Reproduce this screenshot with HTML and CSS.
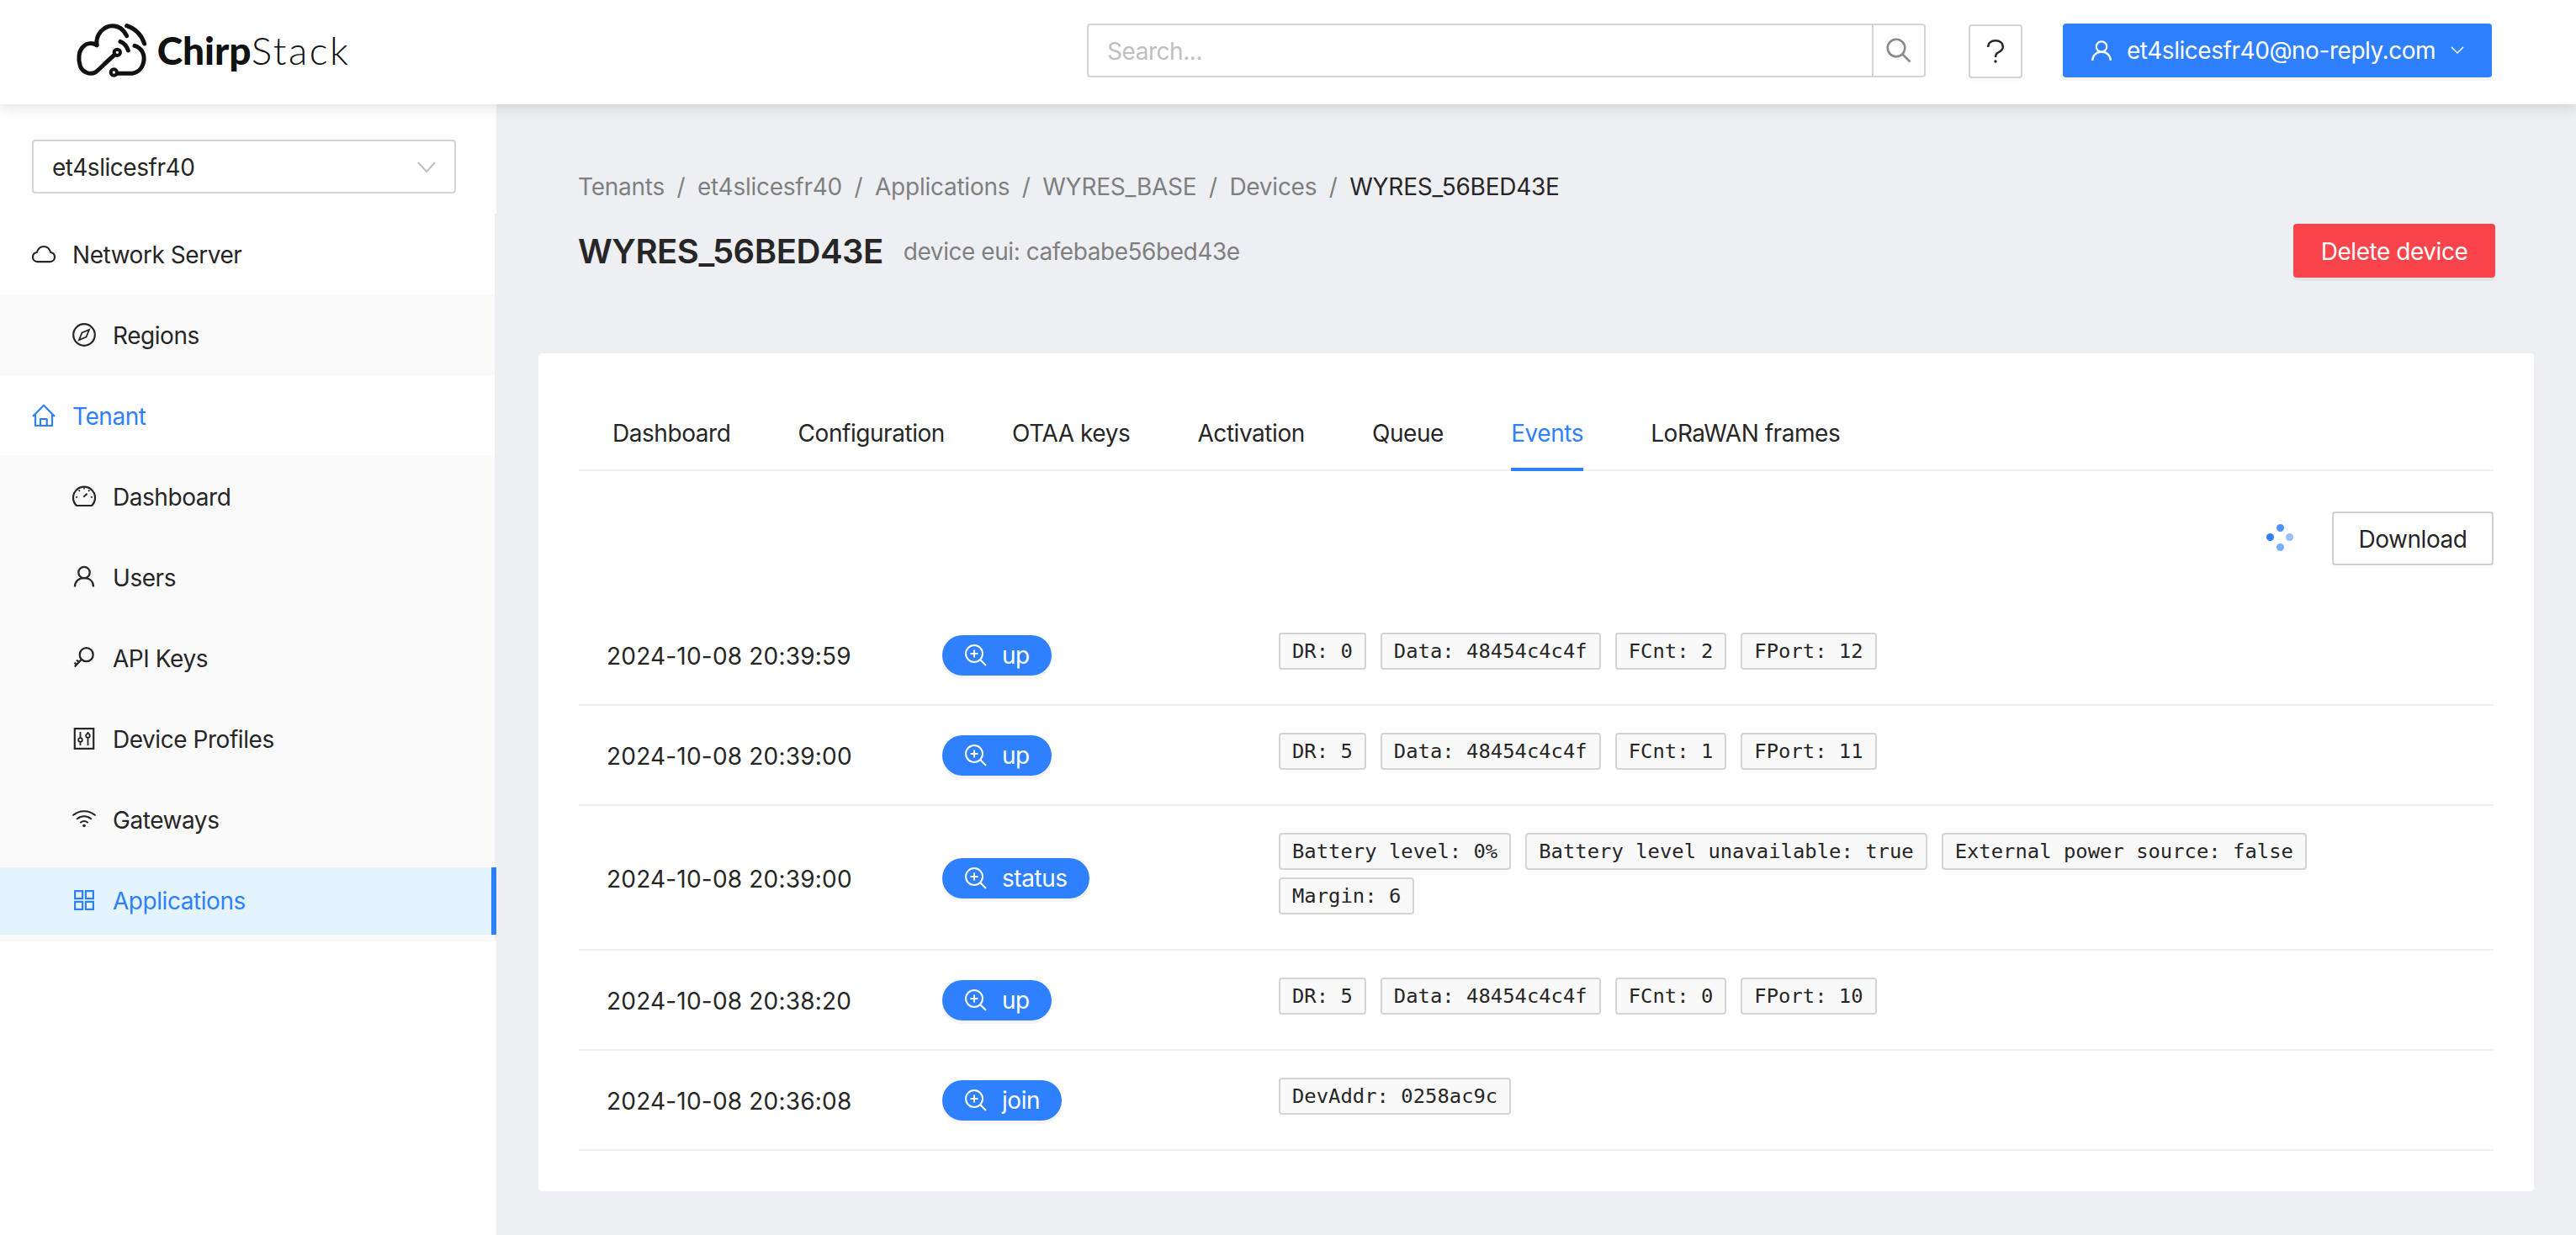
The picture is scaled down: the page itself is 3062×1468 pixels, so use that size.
FILE: index.html
```html
<!DOCTYPE html>
<html lang="en">
<head>
<meta charset="utf-8">
<title>ChirpStack</title>
<link rel="stylesheet" href="styles.css">
</head>
<body>
<header class="topbar">
  <div class="logo">
    <svg class="logo-mark" viewBox="0 0 350 300" fill="none" stroke="#111" stroke-width="15" stroke-linecap="round" stroke-linejoin="round">
      <path d="M165 131C150 122 130 122 117 136C100 152 98 180 106 205C114 228 140 238 160 228C170 222 205 185 229 165"/>
      <circle cx="238" cy="157" r="11" stroke-width="12"/>
      <path d="M165 131C160 92 190 62 222 62C245 62 262 78 272 98"/>
      <path d="M300 133C325 140 338 165 332 192C326 218 306 232 282 232L239 232"/>
      <circle cx="226" cy="228" r="11" stroke-width="12"/>
      <path d="M249 118C262 123 272 135 277 150"/>
      <path d="M272 62C302 72 325 95 335 126"/>
    </svg>
    <span class="logo-text"><b>Chirp</b><span>Stack</span></span>
  </div>
  <div class="search">
    <span class="search-input">Search...</span>
    <span class="search-btn">
      <svg class="ic-search" viewBox="0 0 30 30" fill="none" stroke="#8a8a8a" stroke-width="2.600"><circle cx="12" cy="12" r="10.300"/><path d="M19.500 19.500l9 9"/></svg>
    </span>
  </div>
  <button class="help" aria-label="Help">
    <svg class="ic-help" viewBox="0 0 20 28" fill="none" stroke="#262626" stroke-width="2.400"><path d="M1.200 9C1.200 4 5 1.200 10 1.200S18.800 4 18.800 9C18.800 12.500 16 14 13 15.500 11 16.500 10 18 10 21"/><circle cx="10" cy="26" r="1.700" fill="#262626" stroke="none"/></svg>
  </button>
  <button class="user">
    <svg class="ic-user" viewBox="0 0 24 24" fill="none" stroke="#fff" stroke-width="2.200"><circle cx="12" cy="7.500" r="6.200"/><path d="M1.200 24c0-6 4.500-10.300 10.800-10.300S22.800 18 22.800 24"/></svg>
    <span>et4slicesfr40@no-reply.com</span>
    <svg class="ic-chev-sm" viewBox="0 0 16 10" fill="none" stroke="#fff" stroke-width="1.500"><path d="M1 1l7 7 7-7"/></svg>
  </button>
</header>

<div class="shell">
  <aside class="sider">
    <div class="tenant-select">
      <span>et4slicesfr40</span>
      <svg class="ic-chev" viewBox="0 0 22 14" fill="none" stroke="#bfbfbf" stroke-width="2"><path d="M1 1l10 11L21 1"/></svg>
    </div>
    <nav class="menu">
      <div class="item top">
        <svg class="ic" viewBox="0 0 28 28" fill="none" stroke="#262626" stroke-width="2.200"><path d="M7 23.200h14c3.500 0 6-2.500 6-5.700 0-2.800-1.900-5-4.700-5.500C21 8 18 5 14 5S7 8 5.700 12C2.900 12.500 1 14.700 1 17.500c0 3.200 2.500 5.700 6 5.700z"/></svg>
        <span>Network Server</span>
      </div>
      <div class="group g-one">
        <div class="item sub">
          <svg class="ic" viewBox="0 0 28 28" fill="none" stroke="#262626" stroke-width="2.200"><circle cx="14" cy="14" r="12.800"/><path d="M20 8l-3.500 8.500L8 20l3.500-8.500z" stroke-width="1.800"/></svg>
          <span>Regions</span>
        </div>
      </div>
      <div class="item top tenant">
        <svg class="ic" viewBox="0 0 28 28" fill="none" stroke="#2f80ff" stroke-width="2.200" stroke-linejoin="round"><path d="M1 15L14 1.800 27 15M4 12.500V26h20V12.500M10 26v-8h7.700v8"/></svg>
        <span>Tenant</span>
      </div>
      <div class="group g-two">
        <div class="item sub">
          <svg class="ic" viewBox="0 0 28 28" fill="none" stroke="#262626" stroke-width="2.200"><path d="M5 25A13 13 0 1 1 23 25Z"/><path d="M13.300 14.700L17.700 10.700" stroke-width="2"/><path d="M4 15h2.200M21.800 15H24M7.500 6.500L9 8M14 3.200v2.300M20.500 6.500L19 8" stroke-width="1.700"/></svg>
          <span>Dashboard</span>
        </div>
        <div class="item sub">
          <svg class="ic" viewBox="0 0 28 28" fill="none" stroke="#262626" stroke-width="2.300"><circle cx="14" cy="8.500" r="6.700"/><path d="M3 25.500c0-6.500 4.500-10.300 11-10.300s11 3.800 11 10.300"/></svg>
          <span>Users</span>
        </div>
        <div class="item sub">
          <svg class="ic" viewBox="0 0 28 28" fill="none" stroke="#262626" stroke-width="2.300"><circle cx="16.700" cy="10.200" r="8"/><path d="M10.700 16L2.800 24.500M7.800 19L5 16.500M4.900 22L2.500 19.700"/></svg>
          <span>API Keys</span>
        </div>
        <div class="item sub">
          <svg class="ic" viewBox="0 0 28 28" fill="none" stroke="#262626" stroke-width="2.200"><rect x="2.800" y="2.100" width="22.400" height="23.800"/><path d="M9.500 6v7M9.500 18v4M18.500 6v2M18.500 13v9" stroke-width="1.800"/><circle cx="9.500" cy="15.500" r="2.300" stroke-width="1.800"/><circle cx="18.500" cy="10.500" r="2.300" stroke-width="1.800"/></svg>
          <span>Device Profiles</span>
        </div>
        <div class="item sub">
          <svg class="ic" viewBox="0 0 28 28" fill="none" stroke="#262626" stroke-width="2.100" stroke-linecap="round"><path d="M1.200 8.800C8.500 2.800 19.500 2.800 26.800 8.800M5.800 13.200c4.800-4 11.600-4 16.400 0M10 17.500c2.500-1.900 5.500-1.900 8 0"/><circle cx="14" cy="21.500" r="1.800" fill="#262626" stroke="none"/></svg>
          <span>Gateways</span>
        </div>
        <div class="item sub active">
          <svg class="ic" viewBox="0 0 28 28" fill="none" stroke="#2f80ff" stroke-width="2.200"><rect x="3.100" y="3.100" width="9" height="9"/><rect x="15.900" y="3.100" width="9" height="9"/><rect x="3.100" y="15.900" width="9" height="9"/><rect x="15.900" y="15.900" width="9" height="9"/></svg>
          <span>Applications</span>
        </div>
      </div>
    </nav>
  </aside>

  <main class="content">
    <div class="page-head">
      <ol class="crumbs">
        <li>Tenants</li><li class="sep">/</li>
        <li>et4slicesfr40</li><li class="sep">/</li>
        <li>Applications</li><li class="sep">/</li>
        <li>WYRES_BASE</li><li class="sep">/</li>
        <li>Devices</li><li class="sep">/</li>
        <li class="now">WYRES_56BED43E</li>
      </ol>
      <div class="title-row">
        <h1>WYRES_56BED43E</h1>
        <span class="subtitle">device eui: cafebabe56bed43e</span>
        <button class="danger">Delete device</button>
      </div>
    </div>

    <section class="card">
      <div class="tabs">
        <span>Dashboard</span>
        <span>Configuration</span>
        <span>OTAA keys</span>
        <span>Activation</span>
        <span>Queue</span>
        <span class="on">Events</span>
        <span>LoRaWAN frames</span>
      </div>
      <div class="toolbar">
        <span class="spinner"><i class="d1"></i><i class="d2"></i><i class="d3"></i><i class="d4"></i></span>
        <button class="download">Download</button>
      </div>
      <div class="rows">
        <div class="row">
          <div class="time">2024-10-08 20:39:59</div>
          <div class="kind"><button class="pill"><svg class="ic-zoom" viewBox="0 0 26 26" fill="none" stroke="#fff" stroke-width="2"><circle cx="11" cy="11" r="10"/><path d="M18.500 18.500l6.500 6.500M11 6.500v9M6.500 11h9"/></svg><span>up</span></button></div>
          <div class="tags"><code>DR: 0</code><code>Data: 48454c4c4f</code><code>FCnt: 2</code><code>FPort: 12</code></div>
        </div>
        <div class="row">
          <div class="time">2024-10-08 20:39:00</div>
          <div class="kind"><button class="pill"><svg class="ic-zoom" viewBox="0 0 26 26" fill="none" stroke="#fff" stroke-width="2"><circle cx="11" cy="11" r="10"/><path d="M18.500 18.500l6.500 6.500M11 6.500v9M6.500 11h9"/></svg><span>up</span></button></div>
          <div class="tags"><code>DR: 5</code><code>Data: 48454c4c4f</code><code>FCnt: 1</code><code>FPort: 11</code></div>
        </div>
        <div class="row">
          <div class="time">2024-10-08 20:39:00</div>
          <div class="kind"><button class="pill"><svg class="ic-zoom" viewBox="0 0 26 26" fill="none" stroke="#fff" stroke-width="2"><circle cx="11" cy="11" r="10"/><path d="M18.500 18.500l6.500 6.500M11 6.500v9M6.500 11h9"/></svg><span>status</span></button></div>
          <div class="tags"><code>Battery level: 0%</code><code>Battery level unavailable: true</code><code>External power source: false</code><code>Margin: 6</code></div>
        </div>
        <div class="row">
          <div class="time">2024-10-08 20:38:20</div>
          <div class="kind"><button class="pill"><svg class="ic-zoom" viewBox="0 0 26 26" fill="none" stroke="#fff" stroke-width="2"><circle cx="11" cy="11" r="10"/><path d="M18.500 18.500l6.500 6.500M11 6.500v9M6.500 11h9"/></svg><span>up</span></button></div>
          <div class="tags"><code>DR: 5</code><code>Data: 48454c4c4f</code><code>FCnt: 0</code><code>FPort: 10</code></div>
        </div>
        <div class="row">
          <div class="time">2024-10-08 20:36:08</div>
          <div class="kind"><button class="pill"><svg class="ic-zoom" viewBox="0 0 26 26" fill="none" stroke="#fff" stroke-width="2"><circle cx="11" cy="11" r="10"/><path d="M18.500 18.500l6.500 6.500M11 6.500v9M6.500 11h9"/></svg><span>join</span></button></div>
          <div class="tags"><code>DevAddr: 0258ac9c</code></div>
        </div>
      </div>
    </section>
  </main>
</div>
</body>
</html>
```
FILE: styles.css
```css
* { box-sizing: border-box; }
html, body { margin: 0; height: 100%; }
body {
  width: 3062px;
  height: 1468px;
  overflow: hidden;
  display: flex;
  flex-direction: column;
  background: #eeeff3;
  font-family: Inter, "Liberation Sans", sans-serif;
  font-size: 28px;
  letter-spacing: -.45px;
  color: #262626;
}
button { font: inherit; letter-spacing: inherit; cursor: pointer; }

.topbar {
  position: relative;
  z-index: 2;
  flex: 0 0 124px;
  display: flex;
  align-items: center;
  padding-bottom: 4px;
  background: #fff;
  box-shadow: 0 4px 16px rgba(0, 0, 0, .12);
}
.logo { display: flex; align-items: center; width: 1292px; }
.logo-mark { width: 116.67px; height: 100px; margin-left: 60px; margin-right: 10px; }
.logo-text { font-family: Lato, sans-serif; font-size: 46px; color: #111; line-height: 1; letter-spacing: 0; }
.logo-text b { font-weight: 900; }
.logo-text span { font-weight: 300; letter-spacing: 2.500px; }

.search {
  display: flex;
  width: 997px;
  height: 64px;
  border: 2px solid #d4d4d4;
  border-radius: 4px;
  background: #fff;
}
.search-input { flex: 1; padding: 0 22px; line-height: 62px; color: #bfbfbf; }
.search-btn { flex: 0 0 62px; display: flex; align-items: center; justify-content: center; border-left: 2px solid #d4d4d4; }
.ic-search { width: 30px; height: 30px; }
.help {
  display: flex;
  align-items: center;
  justify-content: center;
  width: 64px;
  height: 64px;
  margin: 2px 0 0 51px;
  padding: 0;
  background: #fff;
  border: 2px solid #d4d4d4;
  border-radius: 4px;
  box-shadow: 0 4px 0 rgba(0, 0, 0, .015);
}
.ic-help { width: 20px; height: 28px; }
.user {
  display: flex;
  align-items: center;
  width: 510px;
  height: 64px;
  margin-left: 48px;
  padding: 0 0 0 34px;
  background: #2f80ff;
  border: 0;
  border-radius: 4px;
  color: #fff;
  box-shadow: 0 4px 0 rgba(0, 0, 0, .045);
}
.ic-user { width: 24px; height: 24px; margin-right: 18px; }
.ic-chev-sm { width: 16px; height: 10px; margin-left: 18px; }

.shell { flex: 1; display: flex; min-height: 0; }
.sider { flex: 0 0 590px; background: #fff; }
.tenant-select {
  display: flex;
  align-items: center;
  justify-content: space-between;
  width: 504px;
  height: 64px;
  margin: 42px 0 0 38px;
  padding: 1px 22px 0;
  border: 2px solid #d4d4d4;
  border-radius: 4px;
  background: #fff;
}
.ic-chev { width: 22px; height: 14px; }
.menu { margin-top: 24px; padding-top: 9px; border-right: 2px solid #eeeff3; }
.item { display: flex; align-items: center; height: 80px; }
.item .ic { flex: none; width: 28px; height: 28px; margin-right: 20px; margin-bottom: 2px; }
.item.top { padding-left: 38px; }
.item.sub { padding-left: 86px; margin-bottom: 16px; }
.group { background: #fafafa; }
.g-one { height: 96px; padding-top: 9px; margin: 7px 0 9px; }
.g-two { padding: 10px 0 8px; margin-top: 6px; }
.g-one .item, .g-two .item:last-child { margin-bottom: 0; }
.tenant { color: #2f80ff; }
.active {
  margin-right: -2px;
  color: #2f80ff;
  background: #e3f4fe;
  border-right: 6px solid #2f80ff;
}

.content { flex: 1; min-width: 0; padding: 0 50px; }
.page-head { padding: 76px 46px 0 47px; height: 296px; }
.crumbs { display: flex; gap: 14.6px; margin: 0; padding: 0; list-style: none; color: #7f7f7f; line-height: 44px; letter-spacing: -.25px; }
.crumbs .now { color: #262626; }
.title-row { display: flex; align-items: center; margin-top: 16px; height: 76px; }
h1 { margin: 2px 0 0; font-size: 40px; font-weight: 600; line-height: 1; color: #262626; }
.subtitle { margin: 2px 0 0 24px; color: #7f7f7f; }
.danger {
  width: 240px;
  height: 64px;
  margin-left: auto;
  padding: 1px 0 0;
  background: #fa444b;
  border: 0;
  border-radius: 4px;
  color: #fff;
  box-shadow: 0 4px 0 rgba(0, 0, 0, .04);
}

.card {
  height: 996px;
  padding: 0 48px;
  background: #fff;
  border-radius: 4px;
}
.tabs {
  display: flex;
  gap: 80.2px;
  height: 140px;
  padding: 73px 0 0 40px;
  border-bottom: 2px solid #f0f0f0;
  line-height: 44px;
}
.tabs .on { position: relative; color: #2f80ff; }
.tabs .on::after {
  content: "";
  position: absolute;
  left: 0;
  right: 0;
  top: 63px;
  height: 4px;
  background: #2f80ff;
}
.toolbar {
  display: flex;
  align-items: center;
  justify-content: flex-end;
  height: 64px;
  margin: 48px 0;
}
.spinner { position: relative; width: 36px; height: 36px; margin: -4px 44px 0 0; }
.spinner i { position: absolute; width: 9px; height: 9px; border-radius: 50%; background: #2f80ff; }
.d1 { left: 13.5px; top: 2.5px; opacity: .85; }
.d2 { left: 2.2px; top: 13.5px; }
.d3 { left: 13.5px; top: 25.5px; opacity: .65; }
.d4 { left: 24.5px; top: 13.5px; opacity: .5; }
.download {
  width: 192px;
  height: 64px;
  padding: 1px 0 0;
  background: #fff;
  border: 2px solid #d0d0d0;
  border-radius: 4px;
  color: #262626;
  box-shadow: 0 4px 0 rgba(0, 0, 0, .015);
}

.row {
  display: grid;
  grid-template-columns: 400px 400px 1fr;
  align-items: center;
  border-bottom: 2px solid #f0f0f0;
}
.time { padding: 3px 0 0 33px; letter-spacing: .2px; }
.kind { padding: 1px 0 0 32px; }
.pill {
  display: inline-flex;
  align-items: center;
  height: 48px;
  padding: 0 26px 0 27px;
  background: #2f80ff;
  border: 0;
  border-radius: 24px;
  color: #fff;
  box-shadow: 0 4px 0 rgba(0, 0, 0, .045);
}
.ic-zoom { width: 26px; height: 26px; margin-right: 18px; }
.tags {
  display: flex;
  flex-wrap: wrap;
  gap: 9px 17px;
  max-width: 1380px;
  padding: 32px 32px 41px;
}
code {
  height: 44px;
  padding: 0 14px;
  background: #f9f9f9;
  border: 2px solid #d4d4d4;
  border-radius: 4px;
  font-family: "DejaVu Sans Mono", "Liberation Mono", monospace;
  font-size: 23.8px;
  letter-spacing: .04px;
  line-height: 40px;
  color: #262626;
}
```
